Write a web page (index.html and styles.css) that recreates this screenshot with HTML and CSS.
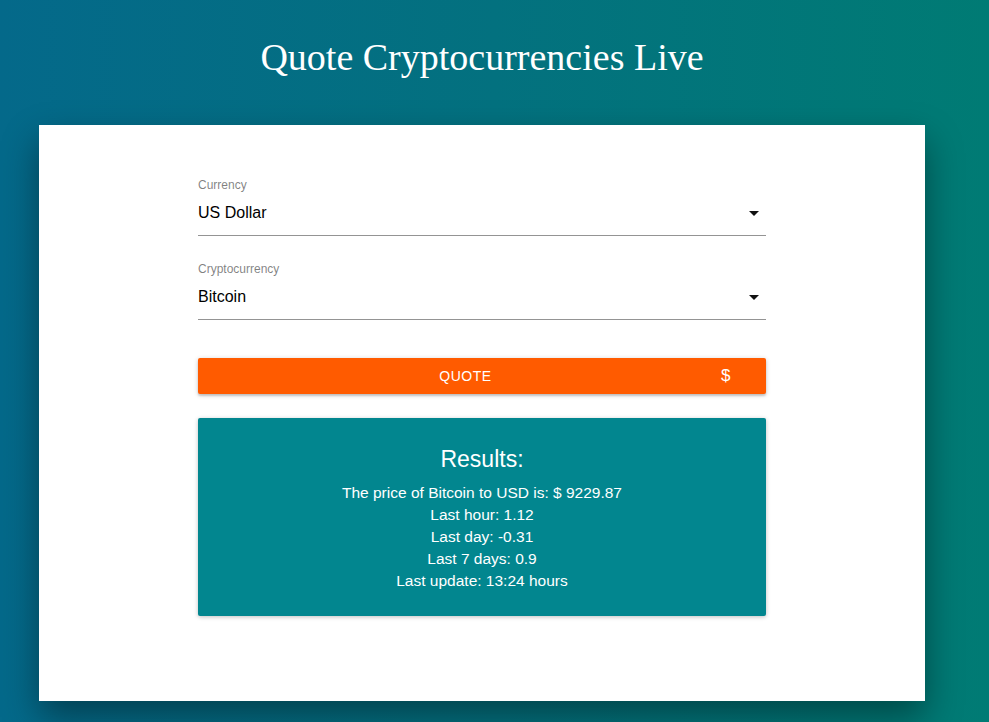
FILE: index.html
```html
<!DOCTYPE html>
<html lang="en">
<head>
<meta charset="utf-8">
<title>Quote Cryptocurrencies Live</title>
<link rel="stylesheet" href="styles.css">
</head>
<body>
<div class="page">
  <h1 class="title">Quote Cryptocurrencies Live</h1>
  <div class="card">
    <form class="form">
      <div class="field">
        <label class="field-label">Currency</label>
        <div class="select">
          <span class="select-value">US Dollar</span>
          <span class="arrow"></span>
        </div>
      </div>
      <div class="field">
        <label class="field-label">Cryptocurrency</label>
        <div class="select">
          <span class="select-value">Bitcoin</span>
          <span class="arrow"></span>
        </div>
      </div>
      <button type="button" class="quote-btn">
        <span class="btn-label">Quote</span>
        <span class="btn-icon">$</span>
      </button>
      <div class="results">
        <h2 class="results-title">Results:</h2>
        <p class="line">The price of Bitcoin to USD is: $ 9229.87</p>
        <p class="line">Last hour: 1.12</p>
        <p class="line">Last day: -0.31</p>
        <p class="line">Last 7 days: 0.9</p>
        <p class="line">Last update: 13:24 hours</p>
      </div>
    </form>
  </div>
</div>
</body>
</html>
```

FILE: styles.css
```css
html, body {
  margin: 0;
  padding: 0;
  height: 100%;
}
body {
  background: linear-gradient(90deg, #04698a 0%, #03717f 50%, #007b74 100%);
  font-family: "Liberation Sans", Arial, Helvetica, sans-serif;
  overflow: hidden;
}
.page {
  width: 886px;
  margin-left: 39px;
}
.title {
  margin: 0;
  padding-top: 35px;
  line-height: 44px;
  font-family: "Liberation Serif", "Times New Roman", serif;
  font-weight: normal;
  font-size: 38px;
  color: #ffffff;
  text-align: center;
}
.card {
  margin-top: 46px;
  height: 576px;
  background: #ffffff;
  box-shadow: 0 16px 34px rgba(0, 0, 0, 0.4);
  box-sizing: border-box;
  padding: 53px 159px 0;
}
.form {
  display: flex;
  flex-direction: column;
}
.field {
  display: flex;
  flex-direction: column;
  margin-bottom: 26px;
}
.field-label {
  font-size: 12px;
  line-height: 14px;
  color: rgba(0, 0, 0, 0.5);
  margin-bottom: 4px;
}
.select {
  display: flex;
  align-items: center;
  justify-content: space-between;
  padding: 7px 0 12px;
  line-height: 20px;
  border-bottom: 1px solid #949494;
}
.select-value {
  font-size: 16px;
  color: #000000;
}
.arrow {
  width: 0;
  height: 0;
  border-left: 5px solid transparent;
  border-right: 5px solid transparent;
  border-top: 5px solid #111111;
  margin-right: 7px;
}
.quote-btn {
  margin-top: 12px;
  height: 36px;
  display: flex;
  align-items: center;
  padding: 0 36px 0 16px;
  border: none;
  border-radius: 2px;
  background: #ff5b00;
  color: #ffffff;
  font-family: "Liberation Sans", Arial, sans-serif;
  font-size: 14px;
  letter-spacing: 0.5px;
  text-transform: uppercase;
  box-shadow: 0 1px 5px rgba(0, 0, 0, 0.2), 0 2px 2px rgba(0, 0, 0, 0.14);
}
.btn-label {
  flex: 1;
  text-align: center;
  padding-right: 4px;
}
.btn-icon {
  font-size: 17px;
  width: 9px;
}
.results {
  margin-top: 24px;
  background: #02868f;
  color: #ffffff;
  text-align: center;
  padding: 27px 16px 24px;
  border-radius: 2px;
  box-shadow: 0 1px 4px rgba(0, 0, 0, 0.25);
}
.results-title {
  margin: 0 0 9px;
  font-size: 23px;
  line-height: 28px;
  font-weight: normal;
}
.line {
  margin: 0;
  font-size: 15.5px;
  line-height: 22px;
}
```
